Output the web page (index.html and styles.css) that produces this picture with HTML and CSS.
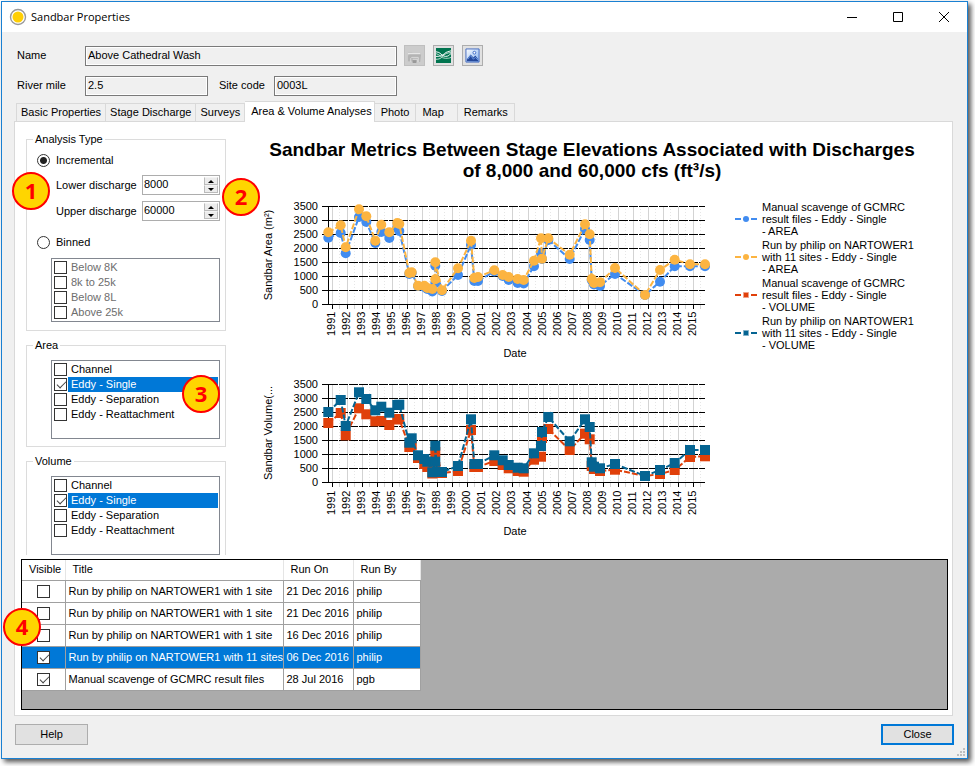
FILE: index.html
```html
<!DOCTYPE html>
<html lang="en">
<head>
<meta charset="utf-8">
<title>Sandbar Properties</title>
<link rel="stylesheet" href="styles.css">
</head>
<body>
<svg class="defs" aria-hidden="true">
  <defs>
    <marker id="dot-blue" markerUnits="userSpaceOnUse" markerWidth="12" markerHeight="12" refX="6" refY="6"><circle cx="6" cy="6" r="5" fill="#418cf0"/></marker>
    <marker id="dot-orange" markerUnits="userSpaceOnUse" markerWidth="12" markerHeight="12" refX="6" refY="6"><circle cx="6" cy="6" r="5" fill="#fcb441"/></marker>
    <marker id="box-red" markerUnits="userSpaceOnUse" markerWidth="12" markerHeight="12" refX="6" refY="6"><rect x="1" y="1" width="10" height="10" fill="#e0400a"/></marker>
    <marker id="box-teal" markerUnits="userSpaceOnUse" markerWidth="12" markerHeight="12" refX="6" refY="6"><rect x="1" y="1" width="10" height="10" fill="#056492"/></marker>
    <g id="grid">
      <path class="grid-minor" d="M84.500 16v98M99.500 16v98M114.500 16v98M129.500 16v98M144.500 16v98M159.500 16v98M174.500 16v98M189.500 16v98M204.500 16v98M219.500 16v98M234.500 16v98M249.500 16v98M264.500 16v98M280.500 16v98M295.500 16v98M310.500 16v98M325.500 16v98M340.500 16v98M355.500 16v98M370.500 16v98M385.500 16v98M400.500 16v98M415.500 16v98M430.500 16v98M445.500 16v98"/>
      <path class="grid-major" d="M77.500 16v98M92.500 16v98M107.500 16v98M122.500 16v98M137.500 16v98M152.500 16v98M167.500 16v98M182.500 16v98M197.500 16v98M212.500 16v98M227.500 16v98M242.500 16v98M257.500 16v98M273.500 16v98M288.500 16v98M303.500 16v98M318.500 16v98M333.500 16v98M348.500 16v98M363.500 16v98M378.500 16v98M393.500 16v98M408.500 16v98M423.500 16v98M438.500 16v98"/>
      <path class="grid-line" d="M74 16.500h376M74 30.500h376M74 44.500h376M74 58.500h376M74 72.500h376M74 86.500h376M74 100.500h376"/>
      <path class="tick-minor" d="M84.500 115v4M99.500 115v4M114.500 115v4M129.500 115v4M144.500 115v4M159.500 115v4M174.500 115v4M189.500 115v4M204.500 115v4M219.500 115v4M234.500 115v4M249.500 115v4M264.500 115v4M280.500 115v4M295.500 115v4M310.500 115v4M325.500 115v4M340.500 115v4M355.500 115v4M370.500 115v4M385.500 115v4M400.500 115v4M415.500 115v4M430.500 115v4M445.500 115v4"/>
      <path class="axis" d="M73.500 16v98M67 114.500h383M67 16.500h6M67 30.500h6M67 44.500h6M67 58.500h6M67 72.500h6M67 86.500h6M67 100.500h6M77.500 115v4M92.500 115v4M107.500 115v4M122.500 115v4M137.500 115v4M152.500 115v4M167.500 115v4M182.500 115v4M197.500 115v4M212.500 115v4M227.500 115v4M242.500 115v4M257.500 115v4M273.500 115v4M288.500 115v4M303.500 115v4M318.500 115v4M333.500 115v4M348.500 115v4M363.500 115v4M378.500 115v4M393.500 115v4M408.500 115v4M423.500 115v4M438.500 115v4"/>
    </g>
  </defs>
</svg>

<div class="window">
  <header class="titlebar">
    <svg class="app-icon" viewBox="0 0 18 18" aria-hidden="true"><circle cx="9" cy="9" r="7.500" fill="#fff" stroke="#999" stroke-width="1.400"/><circle cx="9" cy="9" r="5.500" fill="#ffcf05"/></svg>
    <h1 class="window-title">Sandbar Properties</h1>
    <button class="caption-btn" aria-label="Minimize"><svg viewBox="0 0 12 12"><path d="M1 6.500h10"/></svg></button>
    <button class="caption-btn" aria-label="Maximize"><svg viewBox="0 0 12 12"><path d="M1.500 1.500h9v9h-9z"/></svg></button>
    <button class="caption-btn" aria-label="Close window"><svg viewBox="0 0 12 12"><path d="M1 1l10 10M11 1L1 11"/></svg></button>
  </header>

  <div class="details">
    <div class="row">
      <label class="row-label" for="name">Name</label>
      <input class="field field-name" id="name" value="Above Cathedral Wash" readonly>
      <div class="tools">
        <button class="tool tool-off" aria-label="Open folder" disabled>
          <svg viewBox="0 0 16 16"><path d="M1 4h4l1 1h8v9H1z" fill="#c6c6c6"/><path d="M1 6h13" stroke="#eee"/><path d="M1 14V8l2-1h12l-1 8z" fill="#b4b4b4"/><path d="M4 15v-4l1-1h7v5M6 12h5v3" fill="none" stroke="#ddd"/><path d="M6 13h4v3H6z" fill="#999"/></svg>
        </button>
        <button class="tool" aria-label="Research center">
          <svg viewBox="0 0 16 16"><path d="M0 0h16v16H0z" fill="#00744f"/><g fill="none" stroke="#fff"><path d="M0 4c5 0 6 5 10 5s4-2 6-3"/><path d="M0 6c5 1 5 5 10 5 3 0 4 0 6-1" stroke="#b9dccf"/><path d="M0 9c5 0 7-1 9-3s4-2 7-3"/><path d="M0 12c5 0 6-2 8-4s4-3 8-3" stroke="#d7ebe4"/></g></svg>
        </button>
        <button class="tool" aria-label="Photo">
          <svg viewBox="0 0 16 16"><defs><linearGradient id="sky" x2="1" y2="1"><stop stop-color="#fff"/><stop offset="1" stop-color="#83b1f1"/></linearGradient></defs><path d="M1 1h14v14H1z" fill="url(#sky)" stroke="#4068bd"/><path d="M2 12l4-5 3 3 2-2 3 4v2H2z" fill="#24489a"/><path d="M3 12l3-4 3 4 2-2 3 3" fill="none" stroke="#6e9be5"/><circle cx="10" cy="5" r="1.500" fill="#fff" stroke="#3b69c5"/></svg>
        </button>
      </div>
    </div>
    <div class="row">
      <label class="row-label" for="mile">River mile</label>
      <input class="field field-short" id="mile" value="2.5" readonly>
      <label class="row-label-inner" for="site">Site code</label>
      <input class="field field-short" id="site" value="0003L" readonly>
    </div>
  </div>

  <nav class="tabs" role="tablist">
    <button class="tab tab-long" role="tab">Basic Properties</button>
    <button class="tab tab-long" role="tab">Stage Discharge</button>
    <button class="tab tab-long" role="tab">Surveys</button>
    <button class="tab tab-active" role="tab" aria-selected="true">Area &amp; Volume Analyses</button>
    <button class="tab" role="tab">Photo</button>
    <button class="tab tab-wide" role="tab">Map</button>
    <button class="tab" role="tab">Remarks</button>
  </nav>

  <main class="panel">
    <div class="analysis">
      <aside class="sidebar">
        <fieldset class="group group-type">
          <legend>Analysis Type</legend>
          <label class="choice"><input type="radio" name="type" checked>Incremental</label>
          <div class="spin-row spin-first">
            <label for="lower">Lower discharge</label>
            <div class="spinner">
              <input id="lower" value="8000">
              <div class="spin-btns"><button class="spin-up" aria-label="Increase lower discharge"></button><button class="spin-down" aria-label="Decrease lower discharge"></button></div>
            </div>
          </div>
          <div class="spin-row">
            <label for="upper">Upper discharge</label>
            <div class="spinner">
              <input id="upper" value="60000">
              <div class="spin-btns"><button class="spin-up" aria-label="Increase upper discharge"></button><button class="spin-down" aria-label="Decrease upper discharge"></button></div>
            </div>
          </div>
          <label class="choice choice-binned"><input type="radio" name="type">Binned</label>
          <div class="list list-off">
            <label><input type="checkbox" disabled><span>Below 8K</span></label>
            <label><input type="checkbox" disabled><span>8k to 25k</span></label>
            <label><input type="checkbox" disabled><span>Below 8L</span></label>
            <label><input type="checkbox" disabled><span>Above 25k</span></label>
          </div>
          <span class="badge badge-1">1</span>
          <span class="badge badge-2">2</span>
        </fieldset>
        <fieldset class="group">
          <legend>Area</legend>
          <div class="list list-tall">
            <label><input type="checkbox"><span>Channel</span></label>
            <label class="picked"><input type="checkbox" checked><span>Eddy - Single</span></label>
            <label><input type="checkbox"><span>Eddy - Separation</span></label>
            <label><input type="checkbox"><span>Eddy - Reattachment</span></label>
          </div>
          <span class="badge badge-3">3</span>
        </fieldset>
        <fieldset class="group group-last">
          <legend>Volume</legend>
          <div class="list list-tall">
            <label><input type="checkbox"><span>Channel</span></label>
            <label class="picked"><input type="checkbox" checked><span>Eddy - Single</span></label>
            <label><input type="checkbox"><span>Eddy - Separation</span></label>
            <label><input type="checkbox"><span>Eddy - Reattachment</span></label>
          </div>
        </fieldset>
      </aside>

      <section class="report">
        <h2 class="report-title">Sandbar Metrics Between Stage Elevations Associated with Discharges<br>of 8,000 and 60,000 cfs (ft³/s)</h2>
        <div class="report-body">
          <div class="charts">
            <svg class="chart" viewBox="0 0 472 178" role="img" aria-label="Sandbar area by date">
              <use href="#grid"/>
              <g class="values"><text x="63" y="20">3500</text><text x="63" y="34">3000</text><text x="63" y="48">2500</text><text x="63" y="62">2000</text><text x="63" y="76">1500</text><text x="63" y="90">1000</text><text x="63" y="104">500</text><text x="63" y="118">0</text></g>
              <g class="years" transform="rotate(-90)"><text x="-146" y="80">1991</text><text x="-146" y="95">1992</text><text x="-146" y="110">1993</text><text x="-146" y="125">1994</text><text x="-146" y="140">1995</text><text x="-146" y="155">1996</text><text x="-146" y="170">1997</text><text x="-146" y="185">1998</text><text x="-146" y="200">1999</text><text x="-146" y="215">2000</text><text x="-146" y="230">2001</text><text x="-146" y="245">2002</text><text x="-146" y="260">2003</text><text x="-146" y="276">2004</text><text x="-146" y="291">2005</text><text x="-146" y="306">2006</text><text x="-146" y="321">2007</text><text x="-146" y="336">2008</text><text x="-146" y="351">2009</text><text x="-146" y="366">2010</text><text x="-146" y="381">2011</text><text x="-146" y="396">2012</text><text x="-146" y="411">2013</text><text x="-146" y="426">2014</text><text x="-146" y="441">2015</text></g>
              <text class="axis-name" transform="rotate(-90)" x="-65" y="17">Sandbar Area (m²)</text>
              <text class="axis-name" x="260" y="167">Date</text>
              <polyline class="series blue" points="73.300,47.700 85.700,43 90.700,63.300 104,27 111.300,32 120.300,53 126.300,42 134.300,48 142.300,38 144.300,41 154.300,84 156.700,83 163,96 169.300,97 172.300,99 177.300,101.500 180.300,93 180.300,75.700 187,101 203,85 216,55 219.300,91 223,91 239.300,81.500 247.700,86 253.700,90 262.700,93 268.700,93.500 279,76.300 286,63 287,69 293.300,50 314.700,69 330,39 334.700,50 336.700,90 339,94.500 345,96 360,84 390,105 405,91.700 419.700,76.300 435,76.300 450,76.300"/>
              <polyline class="series orange" points="73.300,42.300 85.700,35.300 90.700,57.300 104,19.300 111.300,26.300 120.300,50.700 126.300,34.700 134.300,42.300 142.300,33 144.300,34 154.300,83 156.700,82.300 163,95.700 169.300,95.700 172.300,98 177.300,99 180.300,89.300 180.300,72.300 187,100.300 203,78.300 216,50.700 219.300,88 223,87 239.300,80.300 247.700,85 253.700,87 262.700,89 268.700,90 279,70.700 286,48.300 287,68.700 293.300,48.300 314.700,64.700 330,34.300 334.700,44.300 336.700,89 339,93 345,92.300 360,78 390,105 405,80 419.700,69.700 435,74.300 450,74.300"/>
            </svg>
            <svg class="chart" viewBox="0 0 472 178" role="img" aria-label="Sandbar volume by date">
              <use href="#grid"/>
              <g class="values"><text x="63" y="20">3500</text><text x="63" y="34">3000</text><text x="63" y="48">2500</text><text x="63" y="62">2000</text><text x="63" y="76">1500</text><text x="63" y="90">1000</text><text x="63" y="104">500</text><text x="63" y="118">0</text></g>
              <g class="years" transform="rotate(-90)"><text x="-147" y="80">1991</text><text x="-147" y="95">1992</text><text x="-147" y="110">1993</text><text x="-147" y="125">1994</text><text x="-147" y="140">1995</text><text x="-147" y="155">1996</text><text x="-147" y="170">1997</text><text x="-147" y="185">1998</text><text x="-147" y="200">1999</text><text x="-147" y="215">2000</text><text x="-147" y="230">2001</text><text x="-147" y="245">2002</text><text x="-147" y="260">2003</text><text x="-147" y="276">2004</text><text x="-147" y="291">2005</text><text x="-147" y="306">2006</text><text x="-147" y="321">2007</text><text x="-147" y="336">2008</text><text x="-147" y="351">2009</text><text x="-147" y="366">2010</text><text x="-147" y="381">2011</text><text x="-147" y="396">2012</text><text x="-147" y="411">2013</text><text x="-147" y="426">2014</text><text x="-147" y="441">2015</text></g>
              <text class="axis-name" transform="rotate(-90)" x="-65" y="17">Sandbar Volume(...</text>
              <text class="axis-name" x="260" y="167">Date</text>
              <polyline class="series red" points="73.300,55 85.700,45 90.700,67.300 104,40.300 111.300,46.300 120.300,53.300 126.300,53 134.300,57 142.300,51.500 144.300,51 154.300,79 156.700,77 163,90 169.300,96 172.300,99 177.300,105.500 180.300,99 180.300,84 187,105 203,103 216,62 219.300,99 223,99 239.300,93 247.700,97 253.700,100.300 262.700,103 268.700,103.700 279,91.700 286,88.700 287,70 293.300,61 314.700,82 330,65.700 334.700,71.300 336.700,98 339,101 345,103 360,101.700 390,108 405,106 419.700,102 435,89 450,88.300"/>
              <polyline class="series teal" points="73.300,44 85.700,32 90.700,58 104,24.300 111.300,31 120.300,42.300 126.300,38.700 134.300,44.700 142.300,37 144.300,36.700 154.300,74.700 156.700,70.300 163,87.300 169.300,91 172.300,93.700 177.300,104.300 180.300,93.700 180.300,77.700 182,104 187,104 203,98 216,51.300 219.300,96 223,96 239.300,87.300 247.700,92.300 253.700,97 262.700,99.700 268.700,100.300 279,85.300 286,78 287,64 293.300,49 314.700,73.300 330,51.300 334.700,59 336.700,94.300 339,98.700 345,100.300 360,96 390,108 405,102 419.700,95 435,82 450,82"/>
            </svg>
          </div>
          <ul class="key">
            <li><svg viewBox="0 0 24 8"><path d="M0 4h6M16 4h6" stroke="#418cf0" stroke-width="2"/><circle cx="11" cy="4" r="3" fill="#418cf0"/></svg><span>Manual scavenge of GCMRC<br>result files - Eddy - Single<br>- AREA</span></li>
            <li><svg viewBox="0 0 24 8"><path d="M0 4h6M16 4h6" stroke="#fcb441" stroke-width="2"/><circle cx="11" cy="4" r="3" fill="#fcb441"/></svg><span>Run by philip on NARTOWER1<br>with 11 sites - Eddy - Single<br>- AREA</span></li>
            <li><svg viewBox="0 0 24 8"><path d="M0 4h6M16 4h6" stroke="#e0400a" stroke-width="2"/><path d="M8.500 1.500h5v5h-5z" fill="#e0400a" stroke="#f0a088"/></svg><span>Manual scavenge of GCMRC<br>result files - Eddy - Single<br>- VOLUME</span></li>
            <li><svg viewBox="0 0 24 8"><path d="M0 4h6M16 4h6" stroke="#056492" stroke-width="2"/><path d="M8.500 1.500h5v5h-5z" fill="#056492" stroke="#82b1c8"/></svg><span>Run by philip on NARTOWER1<br>with 11 sites - Eddy - Single<br>- VOLUME</span></li>
          </ul>
        </div>
      </section>
    </div>

    <div class="runs">
      <table>
        <thead><tr><th class="col-visible">Visible</th><th class="col-title">Title</th><th class="col-on">Run On</th><th class="col-by">Run By</th></tr></thead>
        <tbody>
          <tr><td><input type="checkbox" aria-label="Show run 1"></td><td>Run by philip on NARTOWER1 with 1 site</td><td>21 Dec 2016</td><td>philip</td></tr>
          <tr><td><input type="checkbox" aria-label="Show run 2"></td><td>Run by philip on NARTOWER1 with 1 site</td><td>21 Dec 2016</td><td>philip</td></tr>
          <tr><td><input type="checkbox" aria-label="Show run 3"></td><td>Run by philip on NARTOWER1 with 1 site</td><td>16 Dec 2016</td><td>philip</td></tr>
          <tr class="picked-row"><td><input type="checkbox" aria-label="Show run 4" checked></td><td>Run by philip on NARTOWER1 with 11 sites</td><td>06 Dec 2016</td><td>philip</td></tr>
          <tr><td><input type="checkbox" aria-label="Show run 5" checked></td><td>Manual scavenge of GCMRC result files</td><td>28 Jul 2016</td><td>pgb</td></tr>
        </tbody>
      </table>
      <span class="badge badge-4">4</span>
    </div>
  </main>

  <footer class="footer">
    <button class="btn">Help</button>
    <button class="btn btn-default">Close</button>
  </footer>
  <svg class="grip" viewBox="0 0 8 8" aria-hidden="true"><path d="M6 0h2v2H6zM3 3h2v2H3zM6 3h2v2H6zM0 6h2v2H0zM3 6h2v2H3zM6 6h2v2H6z" fill="#bfbfbf"/></svg>
</div>
</body>
</html>
```
FILE: styles.css
```css
* { box-sizing: border-box; }

body {
  margin: 0;
  padding: 1px 7px 7px 1px;
  min-height: 100vh;
  display: flex;
  background: #fff;
  color: #000;
  font: 11px/13px "Liberation Sans", Arial, sans-serif;
}

button, input { font: inherit; color: inherit; margin: 0; }
button { padding: 0; }

.defs { position: absolute; width: 0; height: 0; }

.window {
  position: relative;
  flex: 1;
  min-width: 0;
  display: flex;
  flex-direction: column;
  border: 1px solid #1a80d2;
  background: #f0f0f0;
  box-shadow: 3px 3px 5px #555;
}

/* Title bar */
.titlebar { display: flex; align-items: center; height: 30px; padding-left: 7px; background: #fff; }
.app-icon { width: 18px; height: 18px; }
.window-title { flex: 1; margin: 0 0 0 4px; font: 11px/16px "Open Sans", "Noto Sans", sans-serif; }
.caption-btn { width: 46px; height: 30px; border: 0; background: none; }
.caption-btn svg { width: 12px; height: 12px; display: block; margin: 0 auto; fill: none; stroke: #000; }

/* Details */
.details { display: flex; flex-direction: column; gap: 9px; padding: 13px 15px 5px; }
.row { display: flex; align-items: center; height: 21px; }
.row-label { width: 68px; }
.row-label-inner { width: 55px; margin-left: 11px; }
.field {
  height: 20px;
  padding: 0 2px 1px;
  border: 1px solid #7a7a7a;
  box-shadow: inset 0 0 0 1px #fff;
  background: #f0f0f0;
  outline: 0;
}
.field-name { width: 312px; }
.field-short { width: 123px; }
.tools { display: flex; gap: 8px; margin-left: 7px; }
.tool { width: 21px; height: 21px; padding: 2px; border: 1px solid #adadad; background: #e1e1e1; }
.tool svg { display: block; width: 15px; height: 15px; }
.tool-off { background: #ccc; border-color: #bfbfbf; }

/* Tabs */
.tabs { display: flex; align-items: flex-end; height: 20px; padding-left: 14px; }
.tab { height: 18px; padding: 0 6px; border: 1px solid #d9d9d9; border-width: 1px 1px 0 0; background: #f0f0f0; white-space: nowrap; }
.tab-long { padding: 0 4px; }
.tab:first-child { border-left-width: 1px; }
.tab-wide { padding: 0 13px 0 6px; }
.tab-active { position: relative; z-index: 1; height: 21px; margin-bottom: -1px; padding: 0 2px 2px 6px; background: #fff; }

/* Tab page */
.panel {
  flex: 1;
  display: flex;
  flex-direction: column;
  margin: 0 14px 0 12px;
  padding: 11px 4px 5px 6px;
  border: 1px solid #d9d9d9;
  background: #fff;
}
.analysis { display: flex; padding-left: 5px; }
.sidebar { width: 200px; flex: none; display: flex; flex-direction: column; gap: 8px; }

.group { position: relative; min-width: 0; margin: 0; padding: 7px 5px 8px 10px; border: 1px solid #dcdcdc; }
.group legend { height: 13px; margin-left: -4px; padding: 0 2px; }
.group-last { border-bottom: 0; padding-bottom: 0; }
.group:not(.group-type) { padding-top: 8px; }
.group:not(.group-type):not(.group-last) { padding-bottom: 7px; }

.choice { display: flex; align-items: center; gap: 6px; height: 15px; }
.choice-binned { margin-top: 14px; }
input[type="radio"] { appearance: none; width: 13px; height: 13px; border: 1px solid #333; border-radius: 50%; background: #fff; }
input[type="radio"]:checked { background: radial-gradient(circle, #222 0 3px, #fff 4px); }

input[type="checkbox"] { appearance: none; position: relative; flex: none; width: 13px; height: 13px; border: 1px solid #333; background: #fff; }
input[type="checkbox"]:checked::before {
  content: "";
  position: absolute;
  left: 4px;
  top: 0;
  width: 4px;
  height: 8px;
  border: solid #444;
  border-width: 0 1px 1px 0;
  transform: rotate(45deg);
}

.spin-row { display: flex; align-items: center; justify-content: space-between; height: 20px; margin-top: 6px; padding-left: 19px; }
.spin-first { margin-top: 7px; }
.spinner { display: flex; width: 78px; height: 20px; padding: 1px; border: 1px solid #adadad; background: #fff; }
.spinner input { flex: 1; min-width: 0; padding: 0 0 2px; border: 0; background: none; outline: 0; }
.spin-btns { display: flex; flex-direction: column; width: 14px; }
.spin-btns button { flex: 1; display: flex; align-items: center; justify-content: center; border: 1px solid #bbb; border-top-color: #f4f4f4; background: #ececec; }
.spin-btns button::before { content: ""; border: solid transparent; border-width: 0 3px; }
.spin-btns .spin-up::before { border-bottom: 3px solid #000; }
.spin-btns .spin-down::before { border-top: 3px solid #000; }

.list { display: flex; flex-direction: column; height: 64px; margin: 8px 0 0 14px; padding: 1px; border: 1px solid #828790; background: #fff; }
.list-tall { height: 79px; margin-top: 0; }
.list label { display: flex; align-items: center; height: 15px; padding-left: 1px; }
.list span { flex: 1; height: 15px; margin-left: 1px; padding-left: 3px; line-height: 15px; }
.list-off { color: #6d6d6d; }
.picked span { background: #0078d7; color: #fff; }

/* Report */
.report { flex: 1; min-width: 0; padding-left: 10px; }
.report-title { margin: 6px 0 9px; text-align: center; font: bold 19px/21px "Liberation Sans", Arial, sans-serif; white-space: nowrap; }
.report-body { display: flex; gap: 8px; padding-left: 19px; }
.charts { display: flex; flex-direction: column; }
.chart { display: block; width: 472px; height: 178px; }
.chart text { font-size: 11px; }
.values { text-anchor: end; }
.axis-name { text-anchor: middle; }
.grid-minor, .grid-major, .grid-line, .tick-minor, .axis { fill: none; }
.grid-minor { stroke: #e6e6e6; stroke-dasharray: 1 2; }
.grid-major, .tick-minor { stroke: #d3d3d3; }
.grid-line { stroke: #000; stroke-dasharray: 9 1; }
.axis { stroke: #000; }
.series { fill: none; stroke-width: 2; stroke-dasharray: 6 2; }
.blue { stroke: #418cf0; marker: url(#dot-blue); }
.orange { stroke: #fcb441; marker: url(#dot-orange); }
.red { stroke: #e0400a; marker: url(#box-red); }
.teal { stroke: #056492; marker: url(#box-teal); }

.key { display: flex; flex-direction: column; gap: 2px; margin: 11px 0 0; padding: 0; list-style: none; line-height: 12px; white-space: nowrap; }
.key li { display: flex; align-items: center; gap: 3px; }
.key svg { width: 24px; height: 8px; }

/* Runs */
.runs { position: relative; flex: 1; margin-top: 4px; border: 1px solid #000; background: #ababab; }
.runs table { width: 399px; border-collapse: collapse; table-layout: fixed; background: #fff; }
.runs th { height: 20px; padding: 0 7px; border-right: 1px solid #e5e5e5; border-bottom: 1px solid #a0a0a0; font-weight: normal; text-align: left; }
.runs td { height: 22px; padding: 0 0 0 3px; border: 1px solid #a0a0a0; border-width: 0 1px 1px 0; white-space: nowrap; }
.runs td:first-child { padding: 0; text-align: center; }
.runs td input { display: block; margin: 0 auto; }
.col-visible { width: 43px; }
.col-title { width: 218px; }
.col-on { width: 70px; }
.picked-row { background: #0078d7; color: #fff; }

/* Callouts */
.badge {
  position: absolute;
  width: 38px;
  height: 38px;
  border: 2px solid #f00;
  border-radius: 50%;
  background: #ffd500;
  color: #f00;
  font: bold 22px/32px "Open Sans", "Noto Sans", sans-serif;
  text-align: center;
}
.badge-1 { left: -15px; top: 26px; }
.badge-2 { left: 195px; top: 32px; }
.badge-3 { left: 155px; top: 23px; }
.badge-4 { left: -19px; top: 48px; }

/* Footer */
.footer { display: flex; justify-content: space-between; padding: 8px 13px 13px; }
.btn { width: 73px; height: 21px; border: 1px solid #adadad; background: #e1e1e1; }
.btn-default { border: 2px solid #0078d7; }
.grip { position: absolute; right: 2px; bottom: 2px; width: 8px; height: 8px; }
```
